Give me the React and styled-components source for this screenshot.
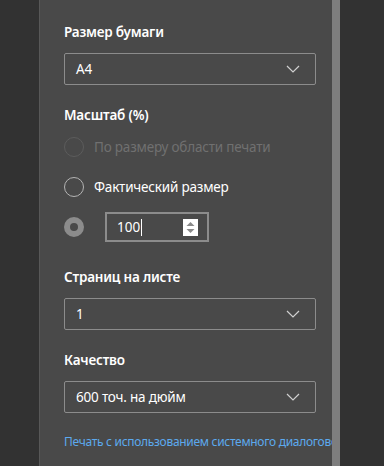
import React from 'react'
import styled, { createGlobalStyle } from 'styled-components'

const GlobalStyle = createGlobalStyle`
  html, body {
    margin: 0;
    padding: 0;
    background: #323232;
  }
  body {
    font-family: 'Noto Sans', 'Open Sans', sans-serif;
    overflow: hidden;
  }
`

function Chevron() {
  return (
    <svg width="14" height="8" viewBox="0 0 14 8" fill="none">
      <path d="M1 1l6 6 6-6" stroke="#d0d0d0" strokeWidth="1.2" />
    </svg>
  )
}

function Select({ value }) {
  return (
    <SelectBox>
      <span>{value}</span>
      <Chevron />
    </SelectBox>
  )
}

export default function App() {
  return (
    <>
      <GlobalStyle />
      <Screen>
        <Gutter />
        <Panel>
          <ClippedLink>
            <LinkText>Выбор области</LinkText>
          </ClippedLink>

          <Heading first>Размер бумаги</Heading>
          <Select value="A4" />

          <Heading>Масштаб (%)</Heading>
          <RadioList>
            <RadioRow>
              <Radio disabled />
              <RadioLabel disabled>По размеру области печати</RadioLabel>
            </RadioRow>
            <RadioRow>
              <Radio />
              <RadioLabel>Фактический размер</RadioLabel>
            </RadioRow>
            <RadioRow>
              <Radio checked />
              <NumberBox>
                <NumberValue>
                  100<Caret />
                </NumberValue>
                <Spinner>
                  <svg width="15" height="17" viewBox="0 0 15 17">
                    <path d="M3.5 7l4-4 4 4z" fill="#8a8a8a" />
                    <path d="M3.5 10l4 4 4-4z" fill="#8a8a8a" />
                  </svg>
                </Spinner>
              </NumberBox>
            </RadioRow>
          </RadioList>

          <Heading>Страниц на листе</Heading>
          <Select value="1" />

          <Heading>Качество</Heading>
          <Select value="600 точ. на дюйм" />

          <BottomLink>Печать с использованием системного диалогового окна</BottomLink>
        </Panel>
        <Scrollbar />
      </Screen>
    </>
  )
}

const Screen = styled.div`
  display: flex;
  height: 466px;
  width: 384px;
  overflow: hidden;
  background: #323232;
`
const Gutter = styled.div`
  width: 39px;
  flex: none;
`
const Panel = styled.div`
  width: 268px;
  flex: none;
  background: #494949;
  border-left: 1px solid #585858;
  padding: 0 0 0 24px;
  display: flex;
  flex-direction: column;
  overflow: hidden;
  white-space: nowrap;
`
const Scrollbar = styled.div`
  width: 8px;
  flex: none;
  background: #7e7e7e;
`
const ClippedLink = styled.div`
  height: 3px;
  overflow: hidden;
  display: flex;
  align-items: flex-end;
`
const LinkText = styled.span`
  display: block;
  font-size: 12px;
  line-height: 16px;
  color: #5ca9ee;
  margin-bottom: 2px;
  padding-left: 56px;
`
const Heading = styled.div`
  font-size: 13.5px;
  font-weight: 600;
  letter-spacing: -0.2px;
  line-height: 20px;
  color: #ffffff;
  margin: ${(p) => (p.first ? '19px' : '20px')} 0 11px;
`
const SelectBox = styled.div`
  box-sizing: border-box;
  width: 252px;
  height: 32px;
  border: 1px solid #8c8c8c;
  border-radius: 2px;
  display: flex;
  align-items: center;
  justify-content: space-between;
  padding: 0 15px 0 11px;
  font-size: 13.5px;
  letter-spacing: -0.2px;
  color: #ffffff;
`
const RadioList = styled.div`
  display: flex;
  flex-direction: column;
  margin-top: -9px;
`
const RadioRow = styled.div`
  height: 40px;
  display: flex;
  align-items: center;
  gap: 10px;
`
const Radio = styled.span`
  box-sizing: border-box;
  width: 20px;
  height: 20px;
  border-radius: 50%;
  flex: none;
  border: ${(p) =>
    p.checked ? '6px solid #8c8c8c' : p.disabled ? '1px solid #5c5c5c' : '1px solid #b4b4b4'};
`
const RadioLabel = styled.span`
  font-size: 13.5px;
  letter-spacing: -0.2px;
  color: ${(p) => (p.disabled ? '#707070' : '#ffffff')};
`
const NumberBox = styled.div`
  box-sizing: border-box;
  width: 104px;
  height: 30px;
  margin-left: 11px;
  border: 2px solid #8c8c8c;
  display: flex;
  align-items: center;
  justify-content: space-between;
  padding: 0 9px 0 10px;
`
const NumberValue = styled.span`
  font-size: 13.5px;
  color: #ffffff;
  display: flex;
  align-items: center;
`
const Caret = styled.span`
  width: 1px;
  height: 17px;
  background: #ffffff;
  margin-left: 1px;
`
const Spinner = styled.span`
  width: 15px;
  height: 17px;
  background: #ffffff;
  display: flex;
`
const BottomLink = styled.div`
  font-size: 12px;
  line-height: 16px;
  letter-spacing: -0.3px;
  color: #5ca9ee;
  margin-top: 21px;
`
